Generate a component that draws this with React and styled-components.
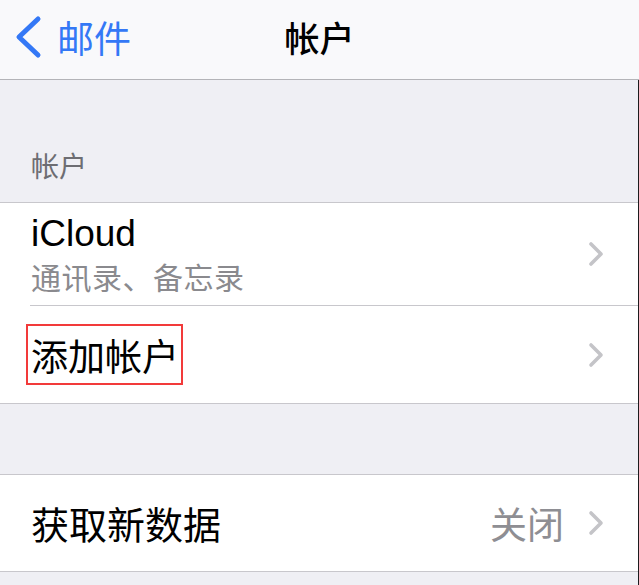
import React from "react";
import styled, { createGlobalStyle } from "styled-components";

const Global = createGlobalStyle`
  html, body { margin: 0; padding: 0; background: #efeff4; }
  body {
    font-family: "Liberation Sans", "Noto Sans CJK SC", sans-serif;
    -webkit-font-smoothing: antialiased;
  }
`;

const Page = styled.div`
  width: 639px;
  height: 585px;
  overflow: hidden;
  background: #efeff4;
  display: flex;
  flex-direction: column;
`;

const NavBar = styled.header`
  height: 79px;
  flex: none;
  background: #f9f9fb;
  border-bottom: 1px solid #b4b4b8;
  display: grid;
  grid-template-columns: 1fr auto 1fr;
  align-items: center;
  padding: 0 14px;
`;

const BackButton = styled.div`
  display: flex;
  align-items: center;
  gap: 15px;
  color: #3478f6;
  font-size: 37px;
  font-family: "Noto Sans CJK SC", sans-serif;
  margin-top: -6px;
`;

const Title = styled.h1`
  margin: 0;
  margin-top: -6px;
  font-size: 35px;
  font-weight: 500;
  color: #000;
  font-family: "Noto Sans CJK SC", sans-serif;
`;

const Content = styled.main`
  flex: 1;
  display: flex;
  flex-direction: column;
  border-right: 1px solid #1c1c1e;
`;

const SectionHeader = styled.div`
  padding: 64px 0 16px 31px;
  font-size: 28px;
  line-height: 42px;
  color: #6d6d72;
  font-family: "Noto Sans CJK SC", sans-serif;
`;

const Spacer = styled.div`
  height: ${(p) => p.$h}px;
  flex: none;
`;

const Group = styled.section`
  background: #fff;
  border-top: 1px solid #c8c7cc;
  border-bottom: 1px solid #c8c7cc;
  padding-left: 30px;
`;

const Row = styled.div`
  height: ${(p) => p.$h}px;
  display: flex;
  align-items: center;
  padding-right: 34px;
  border-top: ${(p) => (p.$sep ? "1px solid #c8c7cc" : "none")};
`;

const RowText = styled.div`
  flex: 1;
  display: flex;
  flex-direction: column;
  padding-left: 1px;
`;

const Label = styled.span`
  font-size: ${(p) => (p.$latin ? 37 : 38)}px;
  line-height: 44px;
  color: #000;
  font-family: ${(p) =>
    p.$latin
      ? `"Liberation Sans", "Noto Sans CJK SC", sans-serif`
      : `"Noto Sans CJK SC", sans-serif`};
`;

const Subtitle = styled.span`
  font-size: 30px;
  line-height: 40px;
  color: #8a8a8e;
  font-family: "Noto Sans CJK SC", sans-serif;
  letter-spacing: 0.5px;
`;

const Highlight = styled.span`
  align-self: flex-start;
  margin-left: -5px;
  border: 2px solid #f23a3a;
  padding: 6px 2px 5px 3px;
  font-size: 37px;
  line-height: 46px;
  color: #000;
  font-family: "Noto Sans CJK SC", sans-serif;
`;

const Value = styled.span`
  font-size: 37px;
  color: #8e8e93;
  margin-right: 24px;
  font-family: "Noto Sans CJK SC", sans-serif;
`;

const Chevron = () => (
  <svg width="16" height="26" viewBox="0 0 16 26" style={{ flex: "none" }}>
    <polyline
      points="3,3 13,13 3,23"
      fill="none"
      stroke="#c4c4c8"
      strokeWidth="3.6"
      strokeLinecap="round"
      strokeLinejoin="round"
    />
  </svg>
);

const BackChevron = () => (
  <svg width="28" height="44" viewBox="0 0 28 44">
    <polyline
      points="24,4 5,22 24,40"
      fill="none"
      stroke="#3478f6"
      strokeWidth="5"
      strokeLinecap="round"
      strokeLinejoin="round"
    />
  </svg>
);

export default function App() {
  return (
    <>
      <Global />
      <Page>
        <NavBar>
          <BackButton>
            <BackChevron />
            <span>邮件</span>
          </BackButton>
          <Title>帐户</Title>
          <div />
        </NavBar>
        <Content>
          <SectionHeader>帐户</SectionHeader>
          <Group>
            <Row $h={102}>
              <RowText>
                <Label $latin>iCloud</Label>
                <Subtitle>通讯录、备忘录</Subtitle>
              </RowText>
              <Chevron />
            </Row>
            <Row $h={97} $sep>
              <RowText>
                <Highlight>添加帐户</Highlight>
              </RowText>
              <Chevron />
            </Row>
          </Group>
          <Spacer $h={70} />
          <Group>
            <Row $h={96}>
              <RowText>
                <Label>获取新数据</Label>
              </RowText>
              <Value>关闭</Value>
              <Chevron />
            </Row>
          </Group>
        </Content>
      </Page>
    </>
  );
}
